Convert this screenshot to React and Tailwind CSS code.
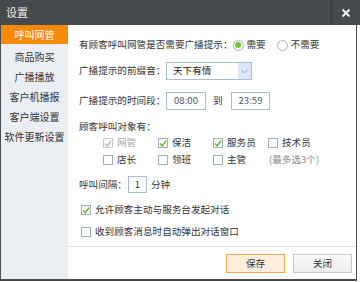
import React from 'react'

const font = { fontFamily: '"Noto Sans CJK SC", "Noto Sans", sans-serif' }

function Check({ checked, disabled }) {
  return (
    <span className={`w-[10px] h-[10px] border ${disabled ? 'border-[#c4c9ce]' : 'border-[#9fb0c2]'} bg-white flex items-center justify-center shrink-0`}>
      {checked && (
        <svg width="9" height="9" viewBox="0 0 9 9">
          <path d="M1.2 4.6 L3.6 7.2 L8 1.2" fill="none" stroke={disabled ? '#b5b9bd' : '#5fb319'} strokeWidth="1.6" />
        </svg>
      )}
    </span>
  )
}

function Radio({ checked }) {
  return (
    <span className="w-[11px] h-[11px] rounded-full border border-[#a7b2bd] bg-white flex items-center justify-center shrink-0">
      {checked && <span className="w-[6px] h-[6px] rounded-full bg-[#74c330]" />}
    </span>
  )
}

function CheckItem({ label, checked, disabled, className = '' }) {
  return (
    <div className={`flex items-center gap-[4px] shrink-0 ${className}`}>
      <Check checked={checked} disabled={disabled} />
      <span className={disabled ? 'text-[#aaaaaa]' : ''}>{label}</span>
    </div>
  )
}

export default function App() {
  const menu = ['商品购买', '广播播放', '客户机播报', '客户端设置', '软件更新设置']
  return (
    <div className="w-[360px] h-[282px] bg-white overflow-hidden text-[#333] leading-none whitespace-nowrap" style={font}>
      <div className="h-[25px] bg-[#464a4d] flex items-center">
        <span className="pl-[6px] text-[11px] text-[#ececec] flex-1">设置</span>
        <div className="w-[29px] h-full border-l border-[#383b3e] flex items-center justify-center">
          <svg width="10" height="10" viewBox="0 0 10 10">
            <path d="M1.5 1.5 L8.5 8.5 M8.5 1.5 L1.5 8.5" stroke="#ffffff" strokeWidth="1.8" />
          </svg>
        </div>
      </div>
      <div className="w-[357px] h-[256px] flex border-l border-r border-b-2 border-[#4a4d50]">
        <div className="w-[67px] shrink-0 bg-[#ebeff3] text-[10px] flex flex-col">
          <div className="h-[19px] bg-[#f88a0b] text-white flex items-center justify-center">呼叫网管</div>
          <div className="mt-[3px] flex flex-col">
            {menu.map(m => (
              <div key={m} className="h-[20px] flex items-center justify-center">{m}</div>
            ))}
          </div>
        </div>
        <div className="flex-1 flex flex-col text-[9.6px]">
          <div className="flex-1 pl-[11px] pt-[12px] flex flex-col">
            <div className="h-[16px] flex items-center">
              <span className="shrink-0">有顾客呼叫网管是否需要广播提示：</span>
              <Radio checked />
              <span className="ml-[3px]">需要</span>
              <span className="ml-[11px]"><Radio /></span>
              <span className="ml-[3px]">不需要</span>
            </div>
            <div className="mt-[9px] h-[18px] flex items-center">
              <span className="w-[87px] shrink-0">广播提示的前缀音：</span>
              <div className="w-[86px] h-[18px] border border-[#a9bdd3] flex items-center">
                <span className="flex-1 pl-[6px] text-[#222]">天下有情</span>
                <span className="w-[13px] h-full bg-[#dce8f5] flex items-center justify-center">
                  <svg width="7" height="5" viewBox="0 0 7 5"><path d="M0.5 0.8 L3.5 4 L6.5 0.8" fill="none" stroke="#8aa0b8" strokeWidth="1" /></svg>
                </span>
              </div>
            </div>
            <div className="mt-[12px] h-[18px] flex items-center">
              <span className="w-[87px] shrink-0">广播提示的时间段：</span>
              <div className="w-[40px] h-[18px] border border-[#a9bdd3] flex items-center justify-center text-[#555]">08:00</div>
              <span className="w-[25px] pl-[7px]">到</span>
              <div className="w-[39px] h-[18px] border border-[#a9bdd3] flex items-center justify-center text-[#555]">23:59</div>
            </div>
            <div className="mt-[9px] h-[16px] flex items-center">顾客呼叫对象有：</div>
            <div className="h-[16px] flex items-center pl-[24px]">
              <CheckItem className="w-[55px]" label="网管" checked disabled />
              <CheckItem className="w-[55px]" label="保洁" checked />
              <CheckItem className="w-[55px]" label="服务员" checked />
              <CheckItem label="技术员" />
            </div>
            <div className="mt-[1px] h-[16px] flex items-center pl-[24px]">
              <CheckItem className="w-[55px]" label="店长" />
              <CheckItem className="w-[55px]" label="领班" />
              <CheckItem className="w-[56px]" label="主管" />
              <span className="text-[#8a8a8a]">(最多选3个)</span>
            </div>
            <div className="mt-[8px] h-[17px] flex items-center">
              <span className="w-[49px] shrink-0">呼叫间隔：</span>
              <div className="w-[19px] h-[17px] border border-[#a9bdd3] flex items-center justify-center text-[#333]">1</div>
              <span className="ml-[4px]">分钟</span>
            </div>
            <div className="mt-[9px] h-[16px] flex items-center pl-[2px]">
              <CheckItem label="允许顾客主动与服务台发起对话" checked />
            </div>
            <div className="mt-[6px] h-[16px] flex items-center pl-[2px]">
              <CheckItem label="收到顾客消息时自动弹出对话窗口" />
            </div>
          </div>
          <div className="h-[33px] border-t border-[#dfe5eb] flex justify-end items-start pt-[7px] pr-[4px] gap-[8px]">
            <button className="w-[59px] h-[19px] border border-[#f5a64c] bg-[#fdeedb] flex items-center justify-center">保存</button>
            <button className="w-[59px] h-[19px] border border-[#c9c9c9] bg-gradient-to-b from-[#fbfbfb] to-[#ececec] flex items-center justify-center">关闭</button>
          </div>
        </div>
      </div>
    </div>
  )
}
